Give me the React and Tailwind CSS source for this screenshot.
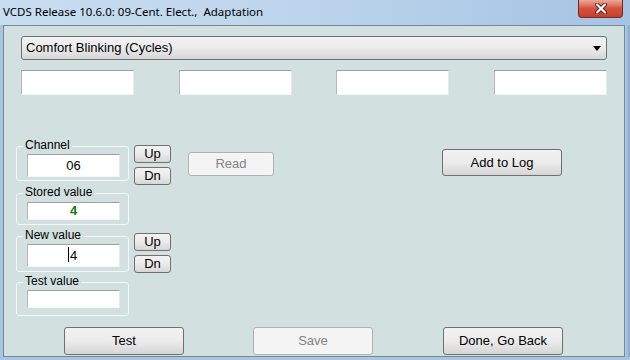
import { useState } from "react";

const face =
  "rounded-[3px] border border-[#707070] bg-gradient-to-b from-[#f2f2f2] via-[#ebebeb] to-[#d6d6d6] text-[13px] text-black";
const btn = `flex items-center justify-center ${face}`;
const btnOff =
  "flex items-center justify-center rounded-[3px] border border-[#adb2b5] bg-[#f4f4f4] text-[13px] text-[#838383]";
const edit =
  "relative flex items-center justify-center border border-t-[#9ba1a6] border-l-[#b4b8bc] border-r-[#e3e9ef] border-b-[#f4f6f7] bg-white text-[13px]";

function Group({ label, h, mt, children }) {
  return (
    <div className={`relative w-[113px] rounded-[3px] border border-[#f3f7f7] ${h} ${mt}`}>
      <span className="absolute -top-[9px] left-[6px] bg-[#d3e0e0] px-[2px] text-[12px] leading-[14px] text-black">
        {label}
      </span>
      {children}
    </div>
  );
}

export default function App() {
  const [channel] = useState("06");
  const fields = [1, 2, 3, 4];

  return (
    <div className="flex h-[360px] w-[630px] flex-col overflow-hidden bg-[#a9c5e2] font-['Liberation_Sans',Arial,sans-serif]">
      {/* title bar */}
      <div className="flex h-[25px] shrink-0 items-start bg-gradient-to-r from-[#c9ddf0] via-[#bcd4ec] to-[#a5c3e3]">
        <span className="ml-[3px] mt-[4px] font-['Noto_Sans',sans-serif] text-[11.5px] leading-[16px] text-black">
          VCDS Release 10.6.0: 09-Cent. Elect.,&nbsp; Adaptation
        </span>
        <div className="ml-auto mr-[7px] flex h-[18px] w-[45px] items-center justify-center rounded-b-[4px] border border-t-0 border-[#7a2a22] bg-gradient-to-b from-[#e9a99c] via-[#d4513d] to-[#c8402f]">
          <svg width="12" height="11" viewBox="0 0 12 11">
            <path d="M2 1.5 L10 9.5 M10 1.5 L2 9.5" stroke="#5a2018" strokeWidth="4" strokeLinecap="round" />
            <path d="M2 1.5 L10 9.5 M10 1.5 L2 9.5" stroke="#ffffff" strokeWidth="2.2" strokeLinecap="round" />
          </svg>
        </div>
      </div>

      <div className="flex h-[332px] shrink-0">
        <div className="w-[3px] shrink-0" />
        {/* client area */}
        <div className="flex w-[622px] flex-col border border-[#71879a] bg-[#d3e0e0]">
          {/* dropdown */}
          <div className={`${face} ml-[17px] mt-[10px] flex h-[24px] w-[586px] items-center justify-between pl-[4px] pr-[5px]`}>
            <span>Comfort Blinking (Cycles)</span>
            <svg width="8" height="5" viewBox="0 0 8 5">
              <path d="M0 0 H8 L4 5 Z" fill="#000" />
            </svg>
          </div>

          {/* four blank fields */}
          <div className="ml-[17px] mt-[10px] flex w-[586px] justify-between">
            {fields.map((f) => (
              <div key={f} className={`${edit} h-[25px] w-[113px]`} />
            ))}
          </div>

          {/* channel / values */}
          <div className="mt-[50px] flex items-start">
            <div className="ml-[12px] flex flex-col">
              <Group label="Channel" h="h-[35px]" mt="mt-[1px]">
                <div className={`${edit} ml-[10px] mt-[7px] h-[23px] w-[93px] text-black`}>{channel}</div>
              </Group>
              <Group label="Stored value" h="h-[32px]" mt="mt-[12px]">
                <div className={`${edit} ml-[10px] mt-[8px] h-[18px] w-[93px] font-bold text-[#0a7a0a]`}>4</div>
              </Group>
              <Group label="New value" h="h-[36px]" mt="mt-[11px]">
                <div className={`${edit} ml-[10px] mt-[7px] h-[23px] w-[93px] text-black`}>
                  <span className="relative">
                    4
                    <span className="absolute -left-[2px] top-[1px] h-[15px] w-px bg-black" />
                  </span>
                </div>
              </Group>
              <Group label="Test value" h="h-[34px]" mt="mt-[10px]">
                <div className={`${edit} ml-[10px] mt-[7px] h-[18px] w-[93px]`} />
              </Group>
            </div>

            <div className="ml-[5px] flex flex-col">
              <div className={`${btn} h-[18px] w-[37px]`}>Up</div>
              <div className={`${btn} mt-[4px] h-[18px] w-[37px]`}>Dn</div>
              <div className={`${btn} mt-[48px] h-[18px] w-[37px]`}>Up</div>
              <div className={`${btn} mt-[4px] h-[18px] w-[37px]`}>Dn</div>
            </div>

            <div className={`${btnOff} ml-[17px] mt-[7px] h-[24px] w-[86px]`}>Read</div>
            <div className={`${btn} ml-[168px] mt-[4px] h-[27px] w-[120px]`}>Add to Log</div>
          </div>

          {/* bottom buttons */}
          <div className="mt-[11px] flex">
            <div className={`${btn} ml-[60px] h-[28px] w-[120px]`}>Test</div>
            <div className={`${btnOff} ml-[69px] h-[28px] w-[120px]`}>Save</div>
            <div className={`${btn} ml-[70px] h-[28px] w-[120px]`}>Done, Go Back</div>
          </div>
        </div>
        <div className="w-[5px] shrink-0 bg-gradient-to-r from-[#b3cbe4] to-[#87a9d0]" />
      </div>
    </div>
  );
}
